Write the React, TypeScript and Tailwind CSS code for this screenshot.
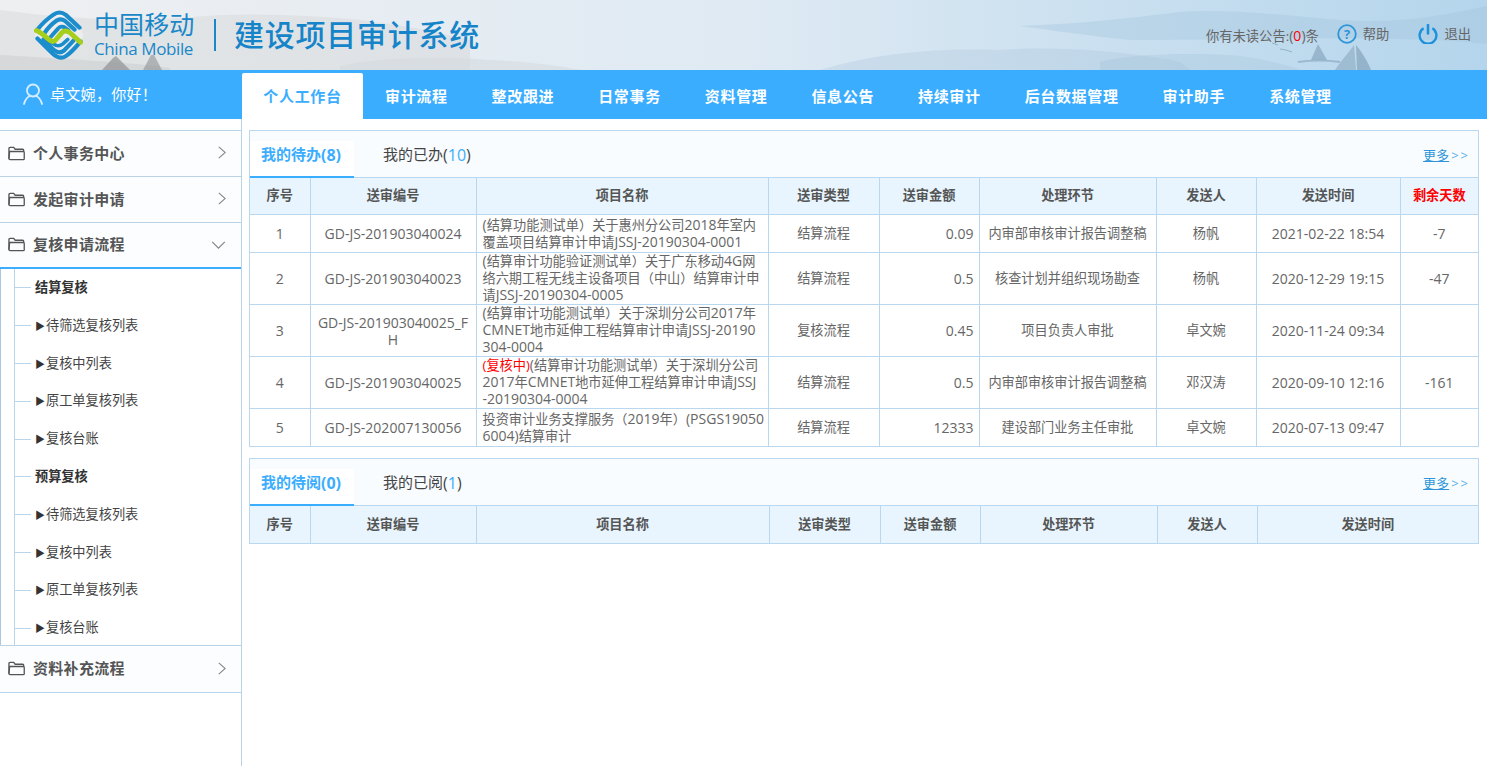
const FONT = "font-['Open_Sans','Noto_Sans_CJK_SC',sans-serif]";

const NAV = ["个人工作台", "审计流程", "整改跟进", "日常事务", "资料管理", "信息公告", "持续审计", "后台数据管理", "审计助手", "系统管理"];

const SUB = [
  { label: "结算复核", bold: true },
  { label: "待筛选复核列表" },
  { label: "复核中列表" },
  { label: "原工单复核列表" },
  { label: "复核台账" },
  { label: "预算复核", bold: true },
  { label: "待筛选复核列表" },
  { label: "复核中列表" },
  { label: "原工单复核列表" },
  { label: "复核台账" },
];

const ROWS = [
  { h: "h-[38px]", no: "GD-JS-201903040024", name: "(结算功能测试单）关于惠州分公司2018年室内\n覆盖项目结算审计申请JSSJ-20190304-0001", type: "结算流程", amount: "0.09", step: "内审部审核审计报告调整稿", from: "杨帆", time: "2021-02-22 18:54", left: "-7" },
  { h: "h-[52px]", no: "GD-JS-201903040023", name: "(结算审计功能验证测试单）关于广东移动4G网\n络六期工程无线主设备项目（中山）结算审计申\n请JSSJ-20190304-0005", type: "结算流程", amount: "0.5", step: "核查计划并组织现场勘查", from: "杨帆", time: "2020-12-29 19:15", left: "-47" },
  { h: "h-[52px]", no: "GD-JS-201903040025_FH", name: "(结算审计功能测试单）关于深圳分公司2017年\nCMNET地市延伸工程结算审计申请JSSJ-20190\n304-0004", type: "复核流程", amount: "0.45", step: "项目负责人审批", from: "卓文婉", time: "2020-11-24 09:34", left: "" },
  { h: "h-[52px]", flag: "(复核中)", no: "GD-JS-201903040025", name: "(结算审计功能测试单）关于深圳分公司\n2017年CMNET地市延伸工程结算审计申请JSSJ\n-20190304-0004", type: "结算流程", amount: "0.5", step: "内审部审核审计报告调整稿", from: "邓汉涛", time: "2020-09-10 12:16", left: "-161" },
  { h: "h-[38px]", no: "GD-JS-202007130056", name: "投资审计业务支撑服务（2019年）(PSGS19050\n6004)结算审计", type: "结算流程", amount: "12333", step: "建设部门业务主任审批", from: "卓文婉", time: "2020-07-13 09:47", left: "" },
];

// latin runs sit a bit larger than the CJK around them in the reference
function Mixed({ text }: { text: string }) {
  return (
    <>
      {text.split(/([\x21-\x7e]+)/).map((part, i) =>
        i % 2 === 1 ? (
          <span key={i} className="text-[14px] leading-none">
            {part}
          </span>
        ) : (
          part
        )
      )}
    </>
  );
}

function Logo() {
  return (
    <svg viewBox="0 0 52 52" className="w-[52px] h-[51px] shrink-0" fill="none">
      <path d="M26 1.5C30 1.5 33 4 36 7L45 16C48 19 50.5 22 50.5 26C50.5 30 48 33 45 36L36 45C33 48 30 50.5 26 50.5C22 50.5 19 48 16 45L7 36C4 33 1.5 30 1.5 26C1.5 22 4 19 7 16L16 7C19 4 22 1.5 26 1.5Z" fill="#fff" fillOpacity="0.35" />
      <path d="M4 20C8 15 14 9 20 5C24 2 29 2 33 5L47 18" stroke="#1b8ccc" strokeWidth="4.2" strokeLinecap="round" />
      <path d="M11 24C14 19 19 14 24 10.500C27 9 29 9 32 11L42 20" stroke="#1b8ccc" strokeWidth="4.2" strokeLinecap="round" />
      <path d="M17 28L25 19C27 16.500 30 16.500 32 18L36 21" stroke="#1b8ccc" strokeWidth="4" strokeLinecap="round" />
      <path d="M4 29L17 42C22 47 27 51 33 47C39 43 44 37 48 32" stroke="#1b8ccc" strokeWidth="4.2" strokeLinecap="round" />
      <path d="M10 30L21 41C25 44 28 44 31 41.500L41 31" stroke="#1b8ccc" strokeWidth="4.2" strokeLinecap="round" />
      <path d="M16 32L23 36C26 37 28 36 30 34.500L35 30" stroke="#1b8ccc" strokeWidth="3.6" strokeLinecap="round" />
      <path d="M3 21C8 23 13 28 17 31C20 33 22 32 24 29L29 23C31 21 34 21 37 23L48 33" stroke="#a5cf1c" strokeWidth="5" strokeLinecap="round" strokeLinejoin="round" />
    </svg>
  );
}

function Scenery() {
  return (
    <svg viewBox="0 0 1487 70" preserveAspectRatio="none" className="absolute inset-0 w-full h-full" fill="none">
      <path d="M0 10C60 18 120 22 180 18C240 12 300 14 360 20C400 25 430 30 470 40L470 70H0Z" fill="#d4d6d8" fillOpacity="0.45" />
      <path d="M0 55C50 58 130 62 170 68L170 70H0Z" fill="#c9cbcd" fillOpacity="0.5" />
      <path d="M340 66C380 58 430 56 490 60C530 62 560 66 580 70H340Z" fill="#d2d7db" fillOpacity="0.5" />
      <path d="M820 70C880 52 940 48 1000 50C1040 47 1110 48 1180 62L1190 70Z" fill="#a9c5da" fillOpacity="0.3" />
      <path d="M1020 26C1080 24 1130 18 1180 12C1230 8 1290 16 1340 20C1400 24 1440 16 1487 6V44C1400 34 1250 40 1130 40C1090 36 1050 30 1020 26Z" fill="#9fc1da" fillOpacity="0.32" />
      <path d="M1100 62C1130 54 1190 52 1240 56C1270 60 1290 66 1300 70H1100Z" fill="#8fb3cf" fillOpacity="0.2" />
      <path d="M102 70L113 58L116 56L122 62L130 70Z" fill="#909294" fillOpacity="0.7" />
      <path d="M143 70L151 55L154 55L162 70Z" fill="#909294" fillOpacity="0.6" />
      <path d="M1298 62C1312 60 1326 60 1340 62" stroke="#8aa9c0" strokeWidth="2" strokeOpacity="0.7" />
      <path d="M1311 60L1318 44L1327 60Z" fill="#7f9fb8" fillOpacity="0.6" />
      <path d="M1335 70C1343 58 1351 50 1354 45L1356 70Z" fill="#8aa9c0" fillOpacity="0.6" />
      <path d="M1356 45C1362 52 1368 62 1371 70L1357 70Z" fill="#7f9fb8" fillOpacity="0.65" />
      <path d="M1272 43L1278 45M1280 49L1286 50M1286 50L1292 52" stroke="#7f9fb8" strokeOpacity="0.7" />
    </svg>
  );
}

function HeaderBar() {
  return (
    <header className="relative h-[70px] bg-gradient-to-r from-[#eeeff1] via-[#dfeaf3] to-[#b4d5ec]">
      <Scenery />
      <div className="relative h-full flex items-center pl-[33px] pr-[16px]">
        <Logo />
        <div className="ml-[9px] w-[102px] -mt-[2px]">
          <div className="text-[25px] leading-[26px] tracking-[0.1px] text-[#1a87c9] whitespace-nowrap">中国移动</div>
          <div className="mt-[2px] text-[17px] leading-[19px] tracking-[-0.4px] text-[#1a87c9] whitespace-nowrap">China Mobile</div>
        </div>
        <div className="ml-[18px] w-[2px] h-[32px] bg-[#1a87c9]" />
        <div className="ml-[18px] text-[30px] leading-[36px] tracking-[0.75px] font-medium text-[#1584c9] whitespace-nowrap">建设项目审计系统</div>
        <div className="ml-auto flex items-center text-[13.3px] text-[#666] whitespace-nowrap">
          <span className="mt-[2px]">
            你有未读公告:<span className="text-[14px]">(<span className="text-[#f00]">0</span>)</span>条
          </span>
          <svg viewBox="0 0 20 20" className="w-5 h-5 ml-[18px] -mt-[2px]" fill="none">
            <circle cx="10" cy="10" r="8.8" stroke="#2e95d9" strokeWidth="1.8" />
            <text x="10" y="14.6" textAnchor="middle" fontSize="13" fontWeight="700" fill="#2e95d9">?</text>
          </svg>
          <span className="ml-[6px] -mt-[1px]">帮助</span>
          <svg viewBox="0 0 20 20" className="w-5 h-5 ml-[29px] -mt-[2px]" fill="none">
            <path d="M5.6 4.2A8.4 8.4 0 1 0 14.4 4.2" stroke="#1d92dc" strokeWidth="2.4" strokeLinecap="butt" />
            <path d="M10 1V9.5" stroke="#1d92dc" strokeWidth="2.6" strokeLinecap="round" />
          </svg>
          <span className="ml-[6px] -mt-[1px]">退出</span>
        </div>
      </div>
    </header>
  );
}

function NavBar() {
  return (
    <nav className="h-[49px] bg-[#3badff] flex">
      <div className="w-[242px] shrink-0 flex items-center pl-[23px] text-white">
        <svg viewBox="0 0 20 22" className="w-5 h-[22px] -mt-[2px]" fill="none" stroke="#d6eeff" strokeWidth="1.8">
          <circle cx="10" cy="7.5" r="6" />
          <path d="M1 21C2 16.5 5 13.5 7 13M19 21C18 16.5 15 13.5 13 13" strokeLinecap="round" />
        </svg>
        <span className="ml-[7px] text-[15px] tracking-[0.3px] whitespace-nowrap">卓文婉，你好！</span>
      </div>
      <div className="flex items-end">
        {NAV.map((n, i) => (
          <a
            key={n}
            className={`h-[46px] flex items-center justify-center text-[15px] font-bold tracking-[0.65px] whitespace-nowrap rounded-t-[2px] ${
              i === 0 ? "w-[121px] bg-white text-[#3badff]" : "px-[22px] text-white"
            }`}
          >
            {n}
          </a>
        ))}
      </div>
    </nav>
  );
}

function FolderIcon() {
  return (
    <svg viewBox="0 0 18 15" className="w-[17px] h-[15px] shrink-0 -mt-px" fill="none" stroke="#555" strokeWidth="1.4">
      <path d="M1 13V2.2C1 1.5 1.5 1 2.2 1H6L7.6 3H15.6C16.2 3 16.6 3.4 16.6 4V5" />
      <path d="M1.7 5.4H16.3C16.9 5.4 17.2 5.8 17.2 6.4V13C17.2 13.6 16.8 14 16.2 14H2.2C1.5 14 1 13.5 1 13Z" />
    </svg>
  );
}

function Section({ label, open, tall }: { label: string; open?: boolean; tall?: boolean }) {
  return (
    <div className={`${tall ? "h-[47px]" : "h-[46px]"} flex items-center pl-[8px] pr-[15px] bg-[#fbfdff] ${open ? "border-b-2 border-[#3badff]" : "border-b border-[#b9d2e6]"}`}>
      <FolderIcon />
      <span className="ml-[8px] -mt-px text-[15px] tracking-[0.3px] font-bold text-[#555] whitespace-nowrap">{label}</span>
      {open ? (
        <svg viewBox="0 0 16 10" className="ml-auto w-[15px] h-[9px]" fill="none" stroke="#888" strokeWidth="1.4">
          <path d="M1 1L8 8L15 1" />
        </svg>
      ) : (
        <svg viewBox="0 0 10 16" className="ml-auto w-[8px] h-[15px] -mt-[2px]" fill="none" stroke="#888" strokeWidth="1.4">
          <path d="M1 1L9 8L1 15" />
        </svg>
      )}
    </div>
  );
}

function Sidebar() {
  return (
    <aside className="w-[242px] shrink-0 border-r border-[#b9d2e6] pt-[11px]">
      <div className="border-t border-[#b9d2e6]">
        <Section label="个人事务中心" />
        <Section label="发起审计申请" />
        <Section label="复核申请流程" open />
        <div className="border-l border-[#a9c9e2] h-[376px] overflow-hidden">
          <div className="ml-[13px] border-l border-[#b9d5ea] h-full">
            {SUB.map((s, i) => (
              <div key={i} className="h-[37.8px] flex items-center">
                <div className="w-[16px] h-px bg-[#b9d5ea] shrink-0" />
                <span className={`ml-[4px] text-[13.2px] whitespace-nowrap ${s.bold ? "font-bold text-[#333]" : "text-[#444]"}`}>
                  {s.bold ? null : <span className="text-[10px] text-[#333] inline-block w-[11px]">▶</span>}
                  {s.label}
                </span>
              </div>
            ))}
          </div>
        </div>
        <div className="border-t border-[#b9d2e6]">
          <Section label="资料补充流程" tall />
        </div>
      </div>
    </aside>
  );
}

function TabHead({ active, activeCount, other, otherCount }: { active: string; activeCount: string; other: string; otherCount: string }) {
  return (
    <div className="h-[47px] flex items-end bg-[#f8fcff] border-b border-[#b9d5ec]">
      <div className="relative h-[37px] w-[104px] -mb-px pl-[11px] pb-[8px] bg-white border-b-2 border-[#3badff] flex items-center text-[15px] font-bold text-[#3badff] whitespace-nowrap">
        {active}
        <span className="text-[16px] leading-none">({activeCount})</span>
      </div>
      <div className="h-[37px] pb-[8px] flex items-center ml-[29px] text-[15px] text-[#444] whitespace-nowrap">
        {other}
        <span className="text-[16px] leading-none">
          (<span className="text-[#3badff]">{otherCount}</span>)
        </span>
      </div>
      <a className="ml-auto mr-[8px] mb-[13px] text-[13px] leading-[17px] text-[#2e95d9] whitespace-nowrap">
        <span className="underline decoration-[#2e95d9]">更多</span>
        <span className="ml-[2px] tracking-[2px] text-[#5aaee6]">&gt;&gt;</span>
      </a>
    </div>
  );
}

const TH = "border border-[#b9d7ef] bg-[#e8f5fe] text-[13.2px] font-bold text-[#555] text-center p-0";
const TD = "border border-[#b9d7ef] text-[13.2px] leading-[17px] text-[#666] text-center p-0";

function TodoPanel() {
  return (
    <section className="border border-[#b9d7ef] border-b-0">
      <TabHead active="我的待办" activeCount="8" other="我的已办" otherCount="10" />
      <table className="w-full table-fixed border-collapse -mt-px">
        <colgroup>
          <col className="w-[60px]" />
          <col className="w-[166px]" />
          <col className="w-[292px]" />
          <col className="w-[111px]" />
          <col className="w-[100px]" />
          <col className="w-[177px]" />
          <col className="w-[100px]" />
          <col className="w-[144px]" />
          <col />
        </colgroup>
        <thead>
          <tr className="h-[37px]">
            <th className={`${TH} border-l-0`}>序号</th>
            <th className={TH}>送审编号</th>
            <th className={TH}>项目名称</th>
            <th className={TH}>送审类型</th>
            <th className={TH}>送审金额</th>
            <th className={TH}>处理环节</th>
            <th className={TH}>发送人</th>
            <th className={TH}>发送时间</th>
            <th className={`${TH} text-[#f00] border-r-0`}>剩余天数</th>
          </tr>
        </thead>
        <tbody>
          {ROWS.map((r, i) => (
            <tr key={r.no} className={r.h}>
              <td className={`${TD} border-l-0 text-[14px]`}>{i + 1}</td>
              <td className={`${TD} px-[6px] break-all text-[14px]`}>{r.no}</td>
              <td className={`${TD} pl-[6px] text-left whitespace-pre`}>
                {r.flag ? <span className="text-[#f00]">{r.flag}</span> : null}
                <Mixed text={r.name} />
              </td>
              <td className={TD}>{r.type}</td>
              <td className={`${TD} text-right pr-[5px] text-[14px]`}>{r.amount}</td>
              <td className={`${TD} whitespace-nowrap`}>{r.step}</td>
              <td className={TD}>{r.from}</td>
              <td className={`${TD} text-[14px]`}>{r.time}</td>
              <td className={`${TD} border-r-0 text-[14px]`}>{r.left}</td>
            </tr>
          ))}
        </tbody>
      </table>
    </section>
  );
}

function ReadPanel() {
  return (
    <section className="mt-[11px] border border-[#b9d7ef] border-b-0">
      <TabHead active="我的待阅" activeCount="0" other="我的已阅" otherCount="1" />
      <table className="w-full table-fixed border-collapse -mt-px">
        <colgroup>
          <col className="w-[60px]" />
          <col className="w-[166px]" />
          <col className="w-[293px]" />
          <col className="w-[111px]" />
          <col className="w-[100px]" />
          <col className="w-[177px]" />
          <col className="w-[100px]" />
          <col />
        </colgroup>
        <thead>
          <tr className="h-[38px]">
            <th className={`${TH} border-l-0`}>序号</th>
            <th className={TH}>送审编号</th>
            <th className={TH}>项目名称</th>
            <th className={TH}>送审类型</th>
            <th className={TH}>送审金额</th>
            <th className={TH}>处理环节</th>
            <th className={TH}>发送人</th>
            <th className={`${TH} border-r-0`}>发送时间</th>
          </tr>
        </thead>
      </table>
    </section>
  );
}

export default function App() {
  return (
    <div className={`${FONT} h-[766px] bg-white flex flex-col overflow-hidden`}>
      <HeaderBar />
      <NavBar />
      <div className="flex flex-1 min-h-0">
        <Sidebar />
        <main className="flex-1 min-w-0 pl-[7px] pr-[8px] pt-[11px]">
          <TodoPanel />
          <ReadPanel />
        </main>
      </div>
    </div>
  );
}
